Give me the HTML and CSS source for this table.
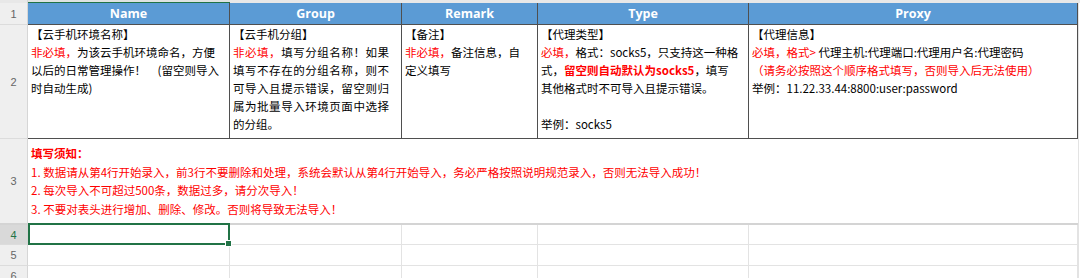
FILE: index.html
```html
<!DOCTYPE html>
<html lang="zh-CN">
<head>
<meta charset="utf-8">
<title>导入模板</title>
<link rel="stylesheet" href="styles.css">
</head>
<body>
<div class="sheet">
  <div class="strip">
    <div class="strip-corner"></div>
    <div class="strip-a"></div>
    <div class="strip-rest"></div>
  </div>
  <div class="body">
    <div class="grid">
      <div class="rh">1</div>
      <div class="th">Name</div>
      <div class="th">Group</div>
      <div class="th">Remark</div>
      <div class="th">Type</div>
      <div class="th">Proxy</div>

      <div class="rh">2</div>
      <div class="td">
        <div class="ln">【云手机环境名称】</div>
        <div class="ln"><span class="red">非必填，</span>为该云手机环境命名，方便</div>
        <div class="ln">以后的日常管理操作！　(留空则导入</div>
        <div class="ln">时自动生成)</div>
      </div>
      <div class="td group">
        <div class="ln">【云手机分组】</div>
        <div class="ln j"><span class="red">非必填，</span>填写分组名称！如果</div>
        <div class="ln j">填写不存在的分组名称，则不</div>
        <div class="ln j">可导入且提示错误，留空则归</div>
        <div class="ln j">属为批量导入环境页面中选择</div>
        <div class="ln">的分组。</div>
      </div>
      <div class="td">
        <div class="ln">【备注】</div>
        <div class="ln"><span class="red">非必填，</span>备注信息，自</div>
        <div class="ln">定义填写</div>
      </div>
      <div class="td">
        <div class="ln">【代理类型】</div>
        <div class="ln"><span class="red">必填，</span>格式：socks5，只支持这一种格</div>
        <div class="ln">式，<b class="red">留空则自动默认为socks5</b>，填写</div>
        <div class="ln">其他格式时不可导入且提示错误。</div>
        <div class="ln">&nbsp;</div>
        <div class="ln">举例：socks5</div>
      </div>
      <div class="td">
        <div class="ln">【代理信息】</div>
        <div class="ln"><span class="red">必填，格式&gt;</span> 代理主机:代理端口:代理用户名:代理密码</div>
        <div class="ln red">（请务必按照这个顺序格式填写，否则导入后无法使用）</div>
        <div class="ln">举例：11.22.33.44:8800:user:password</div>
      </div>

      <div class="rh r3">3</div>
      <div class="notes">
        <div class="ln"><b>填写须知：</b></div>
        <div class="ln">1. 数据请从第4行开始录入，前3行不要删除和处理，系统会默认从第4行开始导入，务必严格按照说明规范录入，否则无法导入成功！</div>
        <div class="ln">2. 每次导入不可超过500条，数据过多，请分次导入！</div>
        <div class="ln">3. 不要对表头进行增加、删除、修改。否则将导致无法导入！</div>
      </div>

      <div class="rh er sel">4</div>
      <div class="ec active"></div>
      <div class="ec"></div>
      <div class="ec"></div>
      <div class="ec"></div>
      <div class="ec"></div>

      <div class="rh er">5</div>
      <div class="ec"></div>
      <div class="ec"></div>
      <div class="ec"></div>
      <div class="ec"></div>
      <div class="ec"></div>

      <div class="rh er">6</div>
      <div class="ec"></div>
      <div class="ec"></div>
      <div class="ec"></div>
      <div class="ec"></div>
      <div class="ec"></div>
    </div>
    <div class="gutter"></div>
  </div>
</div>
</body>
</html>
```
FILE: styles.css
```css
* { box-sizing: border-box; }
html, body { margin: 0; padding: 0; background: #ffffff; }
body {
  width: 1080px;
  height: 278px;
  overflow: hidden;
  font-family: "Noto Sans CJK SC", "Noto Sans", sans-serif;
  font-size: 11.5px;
  color: #000;
}
.sheet { width: 1080px; }

.strip { display: flex; height: 3px; background: #e8e8e8; }
.strip-corner { width: 28px; border-right: 1px solid #d6d6d6; }
.strip-a { width: 202px; border-bottom: 1px solid #217346; background: #dfe3e1; }
.strip-rest { flex: 1; }

.body { display: flex; }
.grid {
  display: grid;
  grid-template-columns: 28px 202px 172px 136px 211px 329px;
  grid-template-rows: 22px 114px 86px 20px 21px 21px;
  width: 1078px;
}
.gutter { width: 2px; border-left: 1px solid #e3e3e3; background: #fff; }

.rh {
  background: #efefef;
  border-right: 1px solid #d6d6d6;
  border-bottom: 1px solid #dcdcdc;
  color: #666;
  font-family: "Liberation Sans", Arial, sans-serif;
  font-size: 11px;
  display: flex;
  align-items: center;
  justify-content: center;
}
.rh.r3 { border-bottom: 2px solid #d4d4d4; }
.rh.sel { background: #d9d9d9; color: #217346; }

.th {
  background: #5b9bd5;
  color: #fff;
  font-family: "Open Sans", "Noto Sans", sans-serif;
  font-weight: 700;
  font-size: 12.5px;
  display: flex;
  align-items: center;
  justify-content: center;
  border-right: 1px solid #4f4f4f;
  border-bottom: 1px solid #4f4f4f;
}

.td {
  border-right: 1px solid #4f4f4f;
  border-bottom: 1px solid #4f4f4f;
  padding: 0 2px 0 3px;
  line-height: 18px;
  overflow: hidden;
}
.td .ln { white-space: nowrap; }
.group { padding-right: 12px; }
.group .ln.j { text-align: justify; text-align-last: justify; }

.red { color: #ff0000; }
b.red { font-weight: 700; }

.notes {
  grid-column: 2 / span 5;
  color: #ff0000;
  padding: 0 3px;
  line-height: 18.5px;
  display: flex;
  flex-direction: column;
  justify-content: center;
  border-bottom: 2px solid #d4d4d4;
}
.notes .ln { white-space: nowrap; }

.ec {
  border-right: 1px solid #e3e3e3;
  border-bottom: 1px solid #e3e3e3;
}
.ec.active { position: relative; }
.ec.active::after {
  content: "";
  position: absolute;
  left: 0;
  top: -2px;
  right: -1px;
  bottom: -1px;
  border: 2px solid #217346;
}
.ec.active::before {
  content: "";
  position: absolute;
  right: -3px;
  bottom: -3px;
  width: 5px;
  height: 5px;
  background: #217346;
  border: 1px solid #fff;
  z-index: 2;
}
```
